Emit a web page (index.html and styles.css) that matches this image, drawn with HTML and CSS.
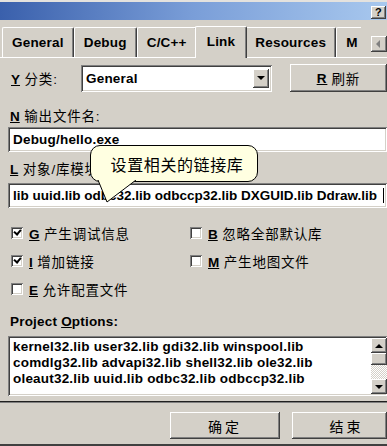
FILE: index.html
```html
<!DOCTYPE html>
<html>
<head>
<meta charset="utf-8">
<link rel="stylesheet" href="styles.css">
</head>
<body>
<div class="titlebar"><span class="help">?</span></div>
<div class="tabs">
  <div class="tabstrip">
    <div class="tab">General</div>
    <div class="tab">Debug</div>
    <div class="tab">C/C++</div>
    <div class="tab active">Link</div>
    <div class="tab">Resources</div>
    <div class="tab cut">M</div>
  </div>
  <div class="tabscroll"><span class="larrow"></span></div>
</div>
<div class="pane">
  <div class="row1">
    <div class="lbl"><b>Y</b> 分类:</div>
    <div class="field select"><span class="seltext">General</span><span class="dd"><span class="darrow"></span></span></div>
    <div class="btn refresh"><b>R</b> 刷新</div>
  </div>
  <div class="lbl caption first"><b>N</b> 输出文件名:</div>
  <div class="field edit">Debug/hello.exe</div>
  <div class="lbl caption second"><b>L</b> 对象/库模块:</div>
  <div class="field edit libs">lib uuid.lib odbc32.lib odbccp32.lib DXGUID.lib Ddraw.lib <span class="caret"></span></div>
  <div class="checks">
    <div class="chk"><span class="box on"></span><span class="lbl"><b>G</b> 产生调试信息</span></div>
    <div class="chk"><span class="box"></span><span class="lbl"><b>B</b> 忽略全部默认库</span></div>
    <div class="chk"><span class="box on"></span><span class="lbl"><b>I</b> 增加链接</span></div>
    <div class="chk"><span class="box"></span><span class="lbl"><b>M</b> 产生地图文件</span></div>
    <div class="chk"><span class="box"></span><span class="lbl"><b>E</b> 允许配置文件</span></div>
  </div>
  <div class="optlabel">Project <u>O</u>ptions:</div>
  <div class="field textarea">
    <div class="lines">
      <div>kernel32.lib user32.lib gdi32.lib winspool.lib</div>
      <div>comdlg32.lib advapi32.lib shell32.lib ole32.lib</div>
      <div>oleaut32.lib uuid.lib odbc32.lib odbccp32.lib</div>
    </div>
    <div class="scrollbar">
      <div class="sbtn"><span class="uarrow"></span></div>
      <div class="thumb"></div>
      <div class="track"></div>
      <div class="sbtn"><span class="darrow"></span></div>
    </div>
  </div>
</div>
<div class="footer">
  <div class="btn big">确定</div>
  <div class="btn big last">结束</div>
</div>
<div class="tip">
  <svg class="tail" width="50" height="30" viewBox="0 0 50 30"><path d="M4 0 L13 22 L42 0" fill="#ffffe1" stroke="#000" stroke-width="1"/></svg>
  <span class="tiptext">设置相关的链接库</span>
</div>
</body>
</html>
```
FILE: styles.css
```css
* { box-sizing: border-box; }
html, body { margin: 0; padding: 0; }
body {
  width: 387px; height: 446px; overflow: hidden;
  background: #d4d0c8;
  font-family: "Liberation Sans", Arial, "Noto Sans CJK SC", sans-serif;
  font-size: 13.5px; font-weight: bold; color: #000;
  letter-spacing: 0.2px;
  position: relative;
  border-bottom: 2px solid #404040;
}
.titlebar {
  height: 20px;
  border-top: 2px solid #e4e2de;
  background: linear-gradient(90deg, #3a60ac 0%, #7a9ed8 50%, #a8c8ee 100%);
  display: flex; justify-content: flex-end; align-items: center;
  padding-right: 1px;
}
.help {
  width: 15px; height: 13px; margin-top: 2px;
  background: #d4d0c8;
  box-shadow: inset -1px -1px #404040, inset 1px 1px #fff, inset -2px -2px #808080;
  font-size: 11px; line-height: 13px; text-align: center;
}
.tabs {
  display: flex; align-items: flex-end;
  height: 31px; margin-top: 6px; padding-left: 2px;
  position: relative;
}
.tabstrip {
  display: flex; align-items: flex-end;
  width: 359px; height: 32px; overflow: hidden;
  margin-bottom: -1px;
}
.tab {
  height: 30px; padding: 0 9px;
  border-top: 1px solid #fff; border-left: 1px solid #fff; border-right: 1px solid #404040;
  border-radius: 2px 2px 0 0;
  box-shadow: inset -1px 0 #808080;
  display: flex; align-items: center;
  margin-bottom: 1px;
  flex: none;
  background: #d4d0c8;
}
.tab.cut { width: 40px; }
.tab.active {
  height: 32px; margin: 0 -2px 0 -2px; padding: 0 11px 2px;
  position: relative; z-index: 1;
}
.tabscroll {
  position: absolute; left: 371px; top: 10px;
  width: 16px; height: 16px;
  background: #d4d0c8;
  box-shadow: inset -1px -1px #404040, inset 1px 1px #fff, inset -2px -2px #808080;
  display: flex; align-items: center; justify-content: center;
}
.larrow { width: 0; height: 0; border-top: 4px solid transparent; border-bottom: 4px solid transparent; border-right: 4px solid #808080; margin-left: -2px; }
.pane {
  border-top: 1px solid #fff;
  height: 345px;
  padding: 6px 0 0 8px;
  border-bottom: 1px solid #202020;
}
.lbl { font-weight: normal; letter-spacing: 0.8px; }
.lbl b { text-decoration: underline; font-weight: bold; letter-spacing: 0; }
.row1 {
  display: grid; grid-template-columns: 73px 191px 1fr;
  align-items: center;
  height: 28px;
}
.row1 .lbl { padding-left: 3px; }
.field {
  background: #fff;
  box-shadow: inset 1px 1px #808080, inset -1px -1px #fff, inset 2px 2px #404040, inset -2px -2px #d4d0c8;
}
.select {
  height: 27px; display: flex; align-items: center; justify-content: space-between;
  padding: 0 2px 0 5px;
}
.dd {
  width: 16px; height: 19px; background: #d4d0c8; margin-right: 1px;
  box-shadow: inset -1px -1px #404040, inset 1px 1px #fff, inset -2px -2px #808080;
  display: flex; align-items: center; justify-content: center;
}
.darrow { width: 0; height: 0; border-left: 4px solid transparent; border-right: 4px solid transparent; border-top: 4px solid #000; }
.uarrow { width: 0; height: 0; border-left: 4px solid transparent; border-right: 4px solid transparent; border-bottom: 4px solid #000; }
.btn {
  background: #d4d0c8;
  box-shadow: inset -1px -1px #404040, inset 1px 1px #fff, inset -2px -2px #808080, inset 2px 2px #d4d0c8;
  display: flex; align-items: center; justify-content: center;
  font-weight: normal; letter-spacing: 1px;
}
.btn b { text-decoration: underline; margin-right: 4px; }
.refresh { height: 28px; margin-left: 18px; }
.caption { height: 16px; line-height: 16px; padding-left: 2px; }
.caption.first { margin-top: 17px; }
.caption.second { margin-top: 10px; }
.edit {
  margin-top: 2px; height: 25px; line-height: 25px;
  padding-left: 5px; white-space: nowrap; overflow: hidden;
}
.caption.second + .edit { margin-top: 5px; }
.libs { letter-spacing: 0; }
.caret { display: inline-block; width: 1px; height: 15px; background: #000; vertical-align: -3px; margin-left: 2px; }
.checks {
  display: grid; grid-template-columns: 179px 1fr;
  grid-auto-rows: 28px; margin-top: 11px;
}
.chk { display: flex; align-items: center; padding-left: 3px; }
.box {
  width: 12px; height: 12px; margin-right: 6px; flex: none;
  background: #fff;
  box-shadow: inset 1px 1px #808080, inset -1px -1px #fff, inset 2px 2px #404040, inset -2px -2px #d4d0c8;
  position: relative;
}
.box.on::after {
  content: ""; position: absolute; left: 3px; top: 2px;
  width: 5px; height: 3px;
  border-left: 2px solid #000; border-bottom: 2px solid #000;
  transform: rotate(-50deg);
}
.optlabel { margin-top: 11px; height: 16px; line-height: 16px; padding-left: 2px; }
.textarea {
  margin-top: 6px; height: 60px; position: relative;
  padding: 3px 0 0 5px; line-height: 16px; overflow: hidden;
}
.scrollbar {
  position: absolute; right: 0; top: 2px; bottom: 2px; width: 16px;
  display: flex; flex-direction: column;
  background: repeating-conic-gradient(#fff 0 25%, #d4d0c8 0 50%) 0 0 / 2px 2px;
}
.sbtn {
  height: 15px; background: #d4d0c8;
  box-shadow: inset -1px -1px #404040, inset 1px 1px #fff, inset -2px -2px #808080;
  display: flex; align-items: center; justify-content: center;
}
.thumb {
  height: 12px; background: #d4d0c8;
  box-shadow: inset -1px -1px #404040, inset 1px 1px #fff, inset -2px -2px #808080;
}
.track { flex: 1; }
.footer {
  display: flex; gap: 12px; padding: 9px 0 0 170px;
  border-top: 1px solid #808080;
}
.big { width: 110px; height: 27px; flex: none; font-size: 14px; letter-spacing: 3px; }
.big.last { width: 95px; padding-left: 14px; }
.tip {
  position: absolute; left: 90px; top: 145px; width: 168px; height: 37px;
  background: #ffffe1; border: 1px solid #000; border-radius: 10px;
  display: flex; align-items: center; justify-content: center;
  padding-left: 6px;
}
.tail { position: absolute; left: 3px; top: 34px; }
.tiptext {
  font-family: "Noto Sans CJK SC", sans-serif; font-weight: normal;
  font-size: 16px; letter-spacing: 0.6px; position: relative;
}
```
